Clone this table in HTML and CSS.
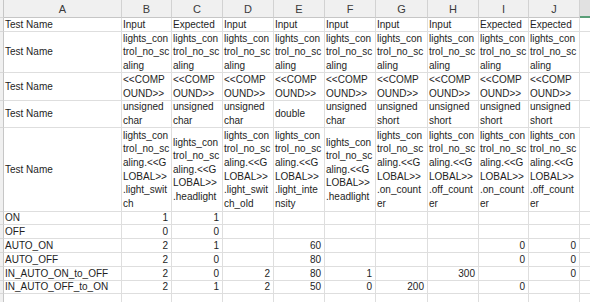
FILE: index.html
```html
<!DOCTYPE html>
<html>
<head>
<meta charset="utf-8">
<link rel="stylesheet" href="styles.css">
</head>
<body>
<div class="sheet">
  <div class="h rh"></div><div class="h">A</div><div class="h">B</div><div class="h">C</div><div class="h">D</div><div class="h">E</div><div class="h">F</div><div class="h">G</div><div class="h">H</div><div class="h">I</div><div class="h">J</div><div class="h sel"></div>

  <div class="rh"></div><div class="c">Test Name</div><div class="c">Input</div><div class="c">Expected</div><div class="c">Input</div><div class="c">Input</div><div class="c">Input</div><div class="c">Input</div><div class="c">Input</div><div class="c">Expected</div><div class="c">Expected</div><div class="c e"></div>

  <div class="rh"></div><div class="c">Test Name</div>
  <div class="c"><span>lights_con</span><span>trol_no_sc</span><span>aling</span></div>
  <div class="c"><span>lights_con</span><span>trol_no_sc</span><span>aling</span></div>
  <div class="c"><span>lights_con</span><span>trol_no_sc</span><span>aling</span></div>
  <div class="c"><span>lights_con</span><span>trol_no_sc</span><span>aling</span></div>
  <div class="c"><span>lights_con</span><span>trol_no_sc</span><span>aling</span></div>
  <div class="c"><span>lights_con</span><span>trol_no_sc</span><span>aling</span></div>
  <div class="c"><span>lights_con</span><span>trol_no_sc</span><span>aling</span></div>
  <div class="c"><span>lights_con</span><span>trol_no_sc</span><span>aling</span></div>
  <div class="c"><span>lights_con</span><span>trol_no_sc</span><span>aling</span></div>
  <div class="c e"></div>

  <div class="rh"></div><div class="c">Test Name</div>
  <div class="c"><span>&lt;&lt;COMP</span><span>OUND&gt;&gt;</span></div>
  <div class="c"><span>&lt;&lt;COMP</span><span>OUND&gt;&gt;</span></div>
  <div class="c"><span>&lt;&lt;COMP</span><span>OUND&gt;&gt;</span></div>
  <div class="c"><span>&lt;&lt;COMP</span><span>OUND&gt;&gt;</span></div>
  <div class="c"><span>&lt;&lt;COMP</span><span>OUND&gt;&gt;</span></div>
  <div class="c"><span>&lt;&lt;COMP</span><span>OUND&gt;&gt;</span></div>
  <div class="c"><span>&lt;&lt;COMP</span><span>OUND&gt;&gt;</span></div>
  <div class="c"><span>&lt;&lt;COMP</span><span>OUND&gt;&gt;</span></div>
  <div class="c"><span>&lt;&lt;COMP</span><span>OUND&gt;&gt;</span></div>
  <div class="c e"></div>

  <div class="rh"></div><div class="c">Test Name</div>
  <div class="c"><span>unsigned</span><span>char</span></div>
  <div class="c"><span>unsigned</span><span>char</span></div>
  <div class="c"><span>unsigned</span><span>char</span></div>
  <div class="c">double</div>
  <div class="c"><span>unsigned</span><span>char</span></div>
  <div class="c"><span>unsigned</span><span>short</span></div>
  <div class="c"><span>unsigned</span><span>short</span></div>
  <div class="c"><span>unsigned</span><span>short</span></div>
  <div class="c"><span>unsigned</span><span>short</span></div>
  <div class="c e"></div>

  <div class="rh"></div><div class="c">Test Name</div>
  <div class="c"><span>lights_con</span><span>trol_no_sc</span><span>aling.&lt;&lt;G</span><span>LOBAL&gt;&gt;</span><span>.light_swit</span><span>ch</span></div>
  <div class="c"><span>lights_con</span><span>trol_no_sc</span><span>aling.&lt;&lt;G</span><span>LOBAL&gt;&gt;</span><span>.headlight</span></div>
  <div class="c"><span>lights_con</span><span>trol_no_sc</span><span>aling.&lt;&lt;G</span><span>LOBAL&gt;&gt;</span><span>.light_swit</span><span>ch_old</span></div>
  <div class="c"><span>lights_con</span><span>trol_no_sc</span><span>aling.&lt;&lt;G</span><span>LOBAL&gt;&gt;</span><span>.light_inte</span><span>nsity</span></div>
  <div class="c"><span>lights_con</span><span>trol_no_sc</span><span>aling.&lt;&lt;G</span><span>LOBAL&gt;&gt;</span><span>.headlight</span></div>
  <div class="c"><span>lights_con</span><span>trol_no_sc</span><span>aling.&lt;&lt;G</span><span>LOBAL&gt;&gt;</span><span>.on_count</span><span>er</span></div>
  <div class="c"><span>lights_con</span><span>trol_no_sc</span><span>aling.&lt;&lt;G</span><span>LOBAL&gt;&gt;</span><span>.off_count</span><span>er</span></div>
  <div class="c"><span>lights_con</span><span>trol_no_sc</span><span>aling.&lt;&lt;G</span><span>LOBAL&gt;&gt;</span><span>.on_count</span><span>er</span></div>
  <div class="c"><span>lights_con</span><span>trol_no_sc</span><span>aling.&lt;&lt;G</span><span>LOBAL&gt;&gt;</span><span>.off_count</span><span>er</span></div>
  <div class="c e"></div>

  <div class="rh"></div><div class="c">ON</div><div class="c n">1</div><div class="c n">1</div><div class="c"></div><div class="c"></div><div class="c"></div><div class="c"></div><div class="c"></div><div class="c"></div><div class="c"></div><div class="c e"></div>

  <div class="rh"></div><div class="c">OFF</div><div class="c n">0</div><div class="c n">0</div><div class="c"></div><div class="c"></div><div class="c"></div><div class="c"></div><div class="c"></div><div class="c"></div><div class="c"></div><div class="c e"></div>

  <div class="rh"></div><div class="c">AUTO_ON</div><div class="c n">2</div><div class="c n">1</div><div class="c"></div><div class="c n">60</div><div class="c"></div><div class="c"></div><div class="c"></div><div class="c n">0</div><div class="c n">0</div><div class="c e"></div>

  <div class="rh"></div><div class="c">AUTO_OFF</div><div class="c n">2</div><div class="c n">0</div><div class="c"></div><div class="c n">80</div><div class="c"></div><div class="c"></div><div class="c"></div><div class="c n">0</div><div class="c n">0</div><div class="c e"></div>

  <div class="rh"></div><div class="c">IN_AUTO_ON_to_OFF</div><div class="c n">2</div><div class="c n">0</div><div class="c n">2</div><div class="c n">80</div><div class="c n">1</div><div class="c"></div><div class="c n">300</div><div class="c"></div><div class="c n">0</div><div class="c e"></div>

  <div class="rh"></div><div class="c">IN_AUTO_OFF_to_ON</div><div class="c n">2</div><div class="c n">1</div><div class="c n">2</div><div class="c n">50</div><div class="c n">0</div><div class="c n">200</div><div class="c"></div><div class="c n">0</div><div class="c"></div><div class="c e"></div>

  <div class="rh"></div><div class="c"></div><div class="c"></div><div class="c"></div><div class="c"></div><div class="c"></div><div class="c"></div><div class="c"></div><div class="c"></div><div class="c"></div><div class="c"></div><div class="c e"></div>
</div>
</body>
</html>
```

FILE: styles.css
```css
html, body {
  margin: 0;
  padding: 0;
  background: #ffffff;
  overflow: hidden;
}

.sheet {
  display: grid;
  grid-template-columns: 4px 118px 50px 51px 51px 51px 51px 52px 51px 50px 51px 1fr;
  grid-template-rows: 18px 14px 41px 28px 27px 84px 13px 14px 14px 14px 14px 13px 14px;
  width: 590px;
  font-family: "Liberation Sans", Arial, sans-serif;
  font-size: 10px;
  color: #1e1e1e;
}

.h {
  background: #f0f0f0;
  border-right: 1px solid #d2d2d2;
  border-bottom: 1px solid #c6c6c6;
  color: #3a3a3a;
  font-size: 11px;
  display: flex;
  align-items: center;
  justify-content: center;
  box-sizing: border-box;
}

.h.sel {
  background: #e1e1e1;
  border-bottom: 2px solid #5a9e78;
  border-right: none;
}

.rh {
  background: #f0f0f0;
  border-right: 1px solid #c6c6c6;
  border-bottom: 1px solid #d8d8d8;
  box-sizing: border-box;
}

.c {
  border-right: 1px solid #dedede;
  border-bottom: 1px solid #dedede;
  box-sizing: border-box;
  padding-left: 1px;
  display: flex;
  flex-direction: column;
  justify-content: center;
  line-height: 13.6px;
  white-space: nowrap;
  overflow: hidden;
}

.c span {
  display: block;
}

.c.n {
  align-items: flex-end;
  padding-right: 3px;
  padding-left: 0;
}

.c.e {
  border-right: none;
}
```
